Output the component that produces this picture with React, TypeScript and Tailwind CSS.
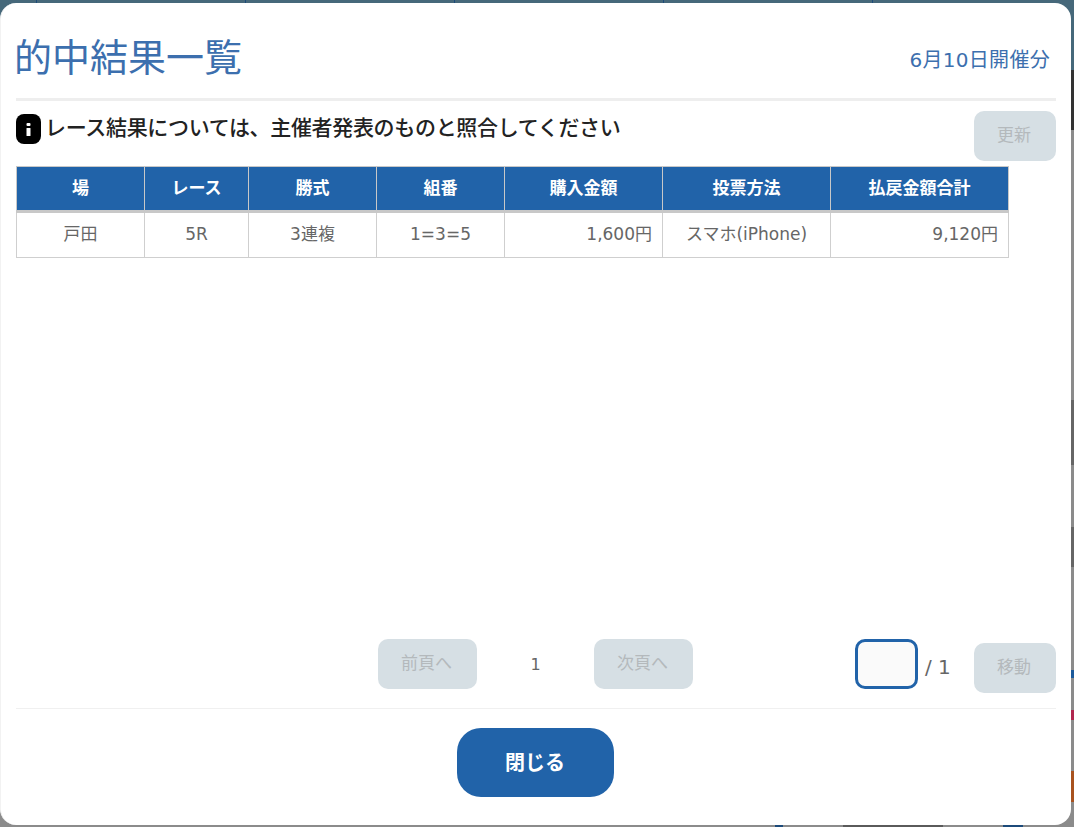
const columns = [
  { label: "場", width: "w-[128px]" },
  { label: "レース", width: "w-[104px]" },
  { label: "勝式", width: "w-[128px]" },
  { label: "組番", width: "w-[128px]" },
  { label: "購入金額", width: "w-[158px]" },
  { label: "投票方法", width: "w-[168px]" },
  { label: "払戻金額合計", width: "w-[178px]" },
]

const cell = "border border-[#cfcfcf] px-[10px] text-[17px] text-[#666] font-normal"
const disabledBtn =
  "flex items-center justify-center rounded-[10px] bg-[#d6dfe4] pr-[2px] text-[17px] text-[#b4b9bc]"

// what shows of the page behind the dialog along its edges
function Backdrop() {
  return (
    <div className="absolute inset-0 flex flex-col bg-[#8b8b8b]">
      <div className="flex h-[70px] gap-[208px] bg-[#46687a] pl-[36px]">
        <i className="h-[6px] w-px bg-[#1c4a7a]" />
        <i className="h-[6px] w-px bg-[#1c4a7a]" />
        <i className="h-[6px] w-px bg-[#1c4a7a]" />
        <i className="h-[6px] w-px bg-[#1c4a7a]" />
        <i className="h-[6px] w-px bg-[#1c4a7a]" />
      </div>
      <div className="h-[60px] bg-[#333333]" />
      <div className="h-[270px]" />
      <div className="h-[65px] bg-[#666666]" />
      <div className="h-[62px]" />
      <div className="h-[40px] bg-[#666666]" />
      <div className="h-[103px]" />
      <div className="h-[8px] bg-[#1c5a9b]" />
      <div className="h-[32px]" />
      <div className="h-[10px] bg-[#b0284f]" />
      <div className="h-[51px]" />
      <div className="h-[31px] bg-[#a8521f]" />
      <div className="flex h-[25px] items-end gap-[60px] pl-[775px]">
        <i className="h-[3px] w-[8px] bg-[#1c4a7a]" />
        <i className="h-[3px] w-[100px] bg-[#5a5a5a]" />
        <i className="h-[3px] w-[20px] bg-[#1c4a7a]" />
      </div>
    </div>
  )
}

export default function App() {
  return (
    <div
      className="relative h-[827px] w-[1074px] overflow-hidden"
      style={{ fontFamily: '"DejaVu Sans", "Noto Sans CJK JP", "Liberation Sans", sans-serif' }}
    >
      <Backdrop />
      <div className="relative h-full pt-[3px] pr-[3px] pb-[2px]">
        <div className="flex h-full flex-col rounded-[16px] border-l border-[#f2f2f2] bg-white px-[15px]">
          <div className="flex h-[98px] items-end justify-between border-b-[3px] border-[#eeeeee] pb-[15px]">
            <h1 className="-ml-[2px] text-[38px] leading-[50px] font-normal text-[#3c6fae]">的中結果一覧</h1>
            <span className="pr-[6px] pb-[10px] text-[20px] leading-[26px] tracking-[0.3px] text-[#3c6fae]">
              6月10日開催分
            </span>
          </div>

          <div className="flex justify-between pt-[10px]">
            <div className="mt-[3px] flex h-[30px] items-center gap-[4px]">
              <span className="flex h-[30px] w-[25px] items-center justify-center rounded-[8px] bg-black">
                <svg width="5" height="13" viewBox="0 0 5 13" fill="white">
                  <rect x="0.5" y="0" width="4" height="3" rx="1" />
                  <rect x="0.5" y="5" width="4" height="8" rx="0.5" />
                </svg>
              </span>
              <span className="-mt-[2px] text-[21px] leading-[30px] font-medium tracking-[-0.33px] text-[#222]">
                レース結果については、主催者発表のものと照合してください
              </span>
            </div>
            <button className={disabledBtn + " h-[50px] w-[82px]"}>更新</button>
          </div>

          <table className="mt-[5px] w-[992px] table-fixed border-collapse">
            <thead>
              <tr>
                {columns.map((c) => (
                  <th
                    key={c.label}
                    className={
                      c.width +
                      " h-[45px] border border-b-[3px] border-[#c8c8c8] bg-[#2163a9] text-[17px] font-bold text-white"
                    }
                  >
                    {c.label}
                  </th>
                ))}
              </tr>
            </thead>
            <tbody>
              <tr className="h-[46px]">
                <td className={cell + " text-center"}>戸田</td>
                <td className={cell + " text-center"}>5R</td>
                <td className={cell + " text-center"}>3連複</td>
                <td className={cell + " text-center"}>1=3=5</td>
                <td className={cell + " text-right"}>1,600円</td>
                <td className={cell + " text-center"}>スマホ(iPhone)</td>
                <td className={cell + " text-right"}>9,120円</td>
              </tr>
            </tbody>
          </table>

          <div className="flex-1" />

          <div className="h-[70px] border-b border-[#f0f0f0]">
            <div className="flex items-start pl-[362px]">
              <button className={disabledBtn + " h-[50px] w-[99px]"}>前頁へ</button>
              <span className="w-[117px] pt-px text-center text-[16px] leading-[50px] text-[#666]">1</span>
              <button className={disabledBtn + " h-[50px] w-[99px]"}>次頁へ</button>
              <div className="ml-auto flex items-start">
                <input
                  className="h-[50px] w-[63px] rounded-[10px] border-[3px] border-[#2163a9] bg-[#fafafa]"
                  readOnly
                />
                <span className="mt-[14px] w-[56px] pl-[7px] text-[20px] leading-[28px] text-[#666]">/ 1</span>
                <button className={disabledBtn + " mt-[4px] h-[50px] w-[82px]"}>移動</button>
              </div>
            </div>
          </div>

          <div className="flex h-[116px] justify-center pt-[19px] pr-[2px]">
            <button className="h-[69px] w-[157px] rounded-[24px] bg-[#2163a9] text-[20px] font-bold text-white">
              閉じる
            </button>
          </div>
        </div>
      </div>
    </div>
  )
}
